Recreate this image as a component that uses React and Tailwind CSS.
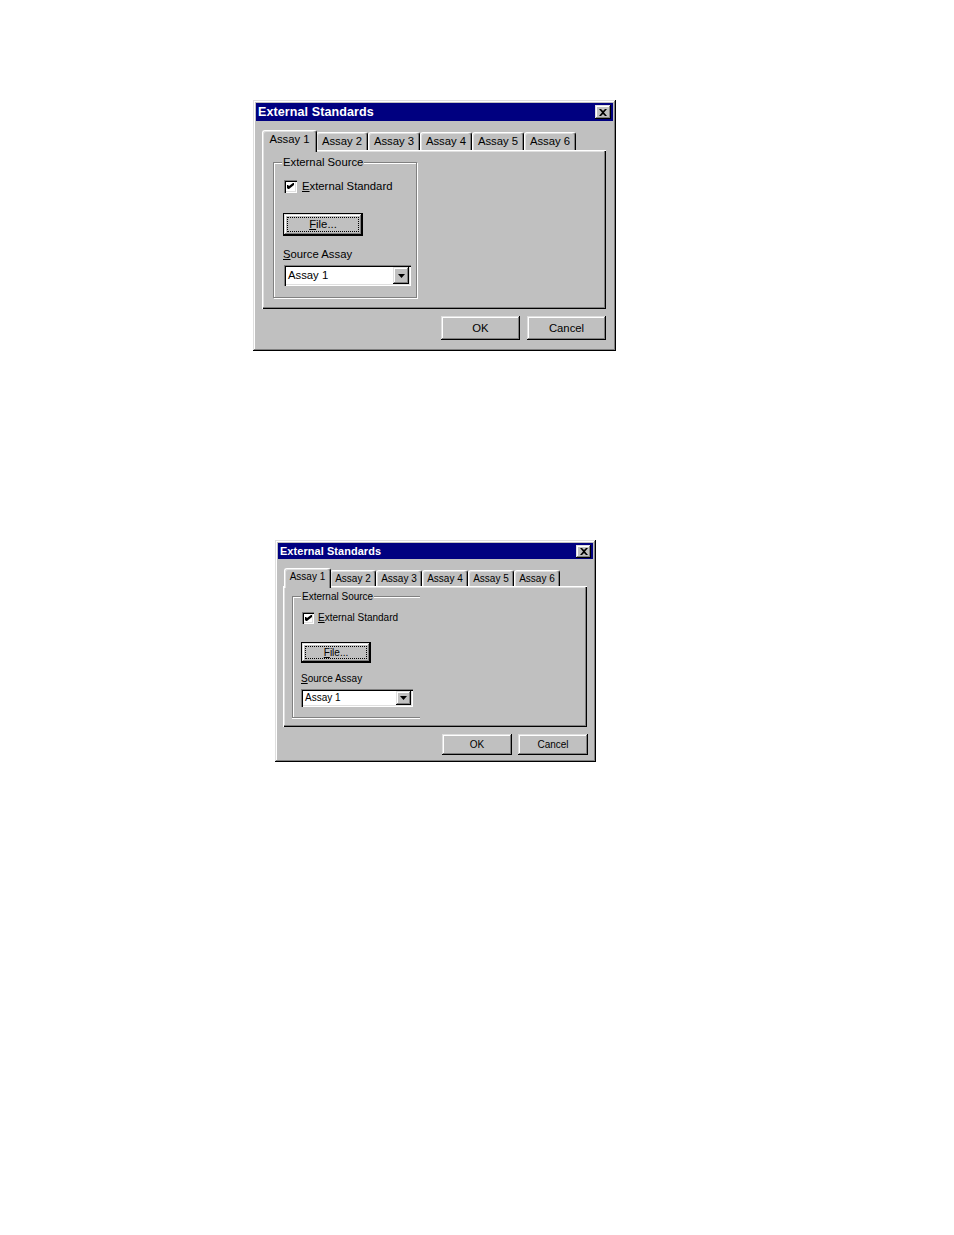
const raised =
  "shadow-[inset_-1px_-1px_0_#000,inset_1px_1px_0_#dfdfdf,inset_-2px_-2px_0_#808080,inset_2px_2px_0_#fff]";
const sunken =
  "shadow-[inset_1px_1px_0_#808080,inset_2px_2px_0_#000,inset_-1px_-1px_0_#fff,inset_-2px_-2px_0_#dfdfdf]";

const big = {
  box: "ml-[253px] mt-[100px] w-[363px] h-[251px]",
  title: "h-[18px] text-[12.5px]",
  close: "w-[16px] h-[14px]",
  text: "text-[11.3px]",
  tabRow: "mt-[9px] ml-[7px] h-[20px]",
  tabSel: "w-[55px] h-[22px] -mx-[1px]",
  tab: "w-[52px] h-[18px]",
  panel: "ml-[6px] w-[344px] h-[159px] pt-[12px] pl-[11px]",
  group: "w-[144px] h-[136px] pl-[9px] pt-[17px]",
  groupBorder: "border border-[#808080] shadow-[inset_1px_1px_0_#fff,1px_1px_0_#fff]",
  label: "-top-[8px] left-[8px]",
  check: "ml-[1px] w-[13px] h-[13px]",
  checkGap: "gap-[5px]",
  file: "mt-[20px] w-[80px] h-[23px]",
  source: "mt-[11px] leading-[14px]",
  combo: "mt-[4px] ml-[1px] w-[127px] h-[21px]",
  drop: "w-[16px]",
  buttons: "mt-[7px] pr-[7px] gap-[7px]",
  btn: "w-[79px] h-[24px]",
};

const small = {
  box: "ml-[275px] mt-[189px] w-[321px] h-[222px]",
  title: "h-[16px] text-[10.9px]",
  close: "w-[15px] h-[13px]",
  text: "text-[10px]",
  tabRow: "mt-[9px] ml-[7px] h-[18px]",
  tabSel: "w-[47px] h-[20px] -mx-[1px]",
  tab: "w-[46px] h-[16px]",
  panel: "ml-[5px] w-[304px] h-[141px] pt-[10px] pl-[9px]",
  group: "w-[128px] h-[122px] pl-[8px] pt-[15px]",
  groupBorder:
    "border border-r-0 border-[#808080] shadow-[inset_1px_1px_0_#fff,0_1px_0_#fff]",
  label: "-top-[7px] left-[8px]",
  check: "ml-[1px] w-[12px] h-[12px]",
  checkGap: "gap-[4px]",
  file: "mt-[18px] w-[70px] h-[21px]",
  source: "mt-[9px] leading-[13px]",
  combo: "mt-[4px] w-[112px] h-[18px]",
  drop: "w-[15px]",
  buttons: "mt-[7px] pr-[5px] gap-[6px]",
  btn: "w-[70px] h-[21px]",
};

function CloseGlyph() {
  return (
    <svg viewBox="0 0 8 7" className="w-[8px] h-[7px]">
      <path d="M0 0h2l2 2 2-2h2L5 3.5 8 7H6L4 5 2 7H0l3-3.5z" fill="#000" />
    </svg>
  );
}

function Dialog({ s }) {
  return (
    <div
      className={`${s.box} bg-[#c0c0c0] p-[3px] flex flex-col ${raised}`}
      style={{ fontFamily: '"Liberation Sans", Arial, sans-serif' }}
    >
      <div
        className={`${s.title} bg-[#000080] flex items-center justify-between pl-[2px] pr-[2px]`}
      >
        <span className="font-bold text-white leading-none tracking-[0.1px]">
          External Standards
        </span>
        <span className={`${s.close} bg-[#c0c0c0] flex items-center justify-center ${raised}`}>
          <CloseGlyph />
        </span>
      </div>

      <div className={`${s.tabRow} flex items-end ${s.text} text-black`}>
        {["Assay 1", "Assay 2", "Assay 3", "Assay 4", "Assay 5", "Assay 6"].map(
          (t, i) => (
            <div
              key={t}
              className={`${
                i === 0 ? `${s.tabSel} relative z-10 -mb-[2px] pb-[3px]` : s.tab
              } bg-[#c0c0c0] flex items-center justify-center rounded-t-[3px] border-t border-l border-white border-r border-r-black shadow-[inset_-1px_0_0_#808080,inset_1px_1px_0_#dfdfdf] leading-none`}
            >
              {t}
            </div>
          )
        )}
      </div>

      <div
        className={`${s.panel} bg-[#c0c0c0] shadow-[inset_1px_1px_0_#fff,inset_-1px_-1px_0_#000,inset_-2px_-2px_0_#808080,inset_2px_2px_0_#dfdfdf] ${s.text} text-black`}
      >
        <div className={`${s.group} relative ${s.groupBorder}`}>
          <span className={`absolute ${s.label} bg-[#c0c0c0] px-[1px] leading-[14px]`}>
            External Source
          </span>
          <div className={`flex items-center ${s.checkGap}`}>
            <span
              className={`${s.check} bg-white flex items-center justify-center ${sunken}`}
            >
              <svg viewBox="0 0 7 7" className="w-[7px] h-[7px]">
                <path
                  d="M0 2h1l1 1 4-3h1v2L2 6H1L0 5z"
                  fill="#000"
                />
              </svg>
            </span>
            <span className="leading-none">
              <span className="underline underline-offset-1">E</span>xternal
              Standard
            </span>
          </div>

          <div className={`${s.file} border border-black bg-[#c0c0c0] p-[3px] ${raised}`}>
            <div className="w-full h-full border border-dotted border-black flex items-center justify-center leading-none">
              <span>
                <span className="underline underline-offset-1">F</span>ile...
              </span>
            </div>
          </div>

          <div className={s.source}>
            <span className="underline underline-offset-1">S</span>ource Assay
          </div>

          <div className={`${s.combo} bg-white flex p-[2px] ${sunken}`}>
            <div className="flex-1 flex items-center pl-[2px] leading-none">
              Assay 1
            </div>
            <div
              className={`${s.drop} bg-[#c0c0c0] flex items-center justify-center ${raised}`}
            >
              <svg viewBox="0 0 7 4" className="w-[7px] h-[4px]">
                <path d="M0 0h7L3.5 4z" fill="#000" />
              </svg>
            </div>
          </div>
        </div>
      </div>

      <div className={`${s.buttons} flex justify-end ${s.text} text-black`}>
        <div className={`${s.btn} bg-[#c0c0c0] flex items-center justify-center ${raised}`}>
          OK
        </div>
        <div className={`${s.btn} bg-[#c0c0c0] flex items-center justify-center ${raised}`}>
          Cancel
        </div>
      </div>
    </div>
  );
}

export default function App() {
  return (
    <div className="w-[954px] h-[1235px] bg-white flex flex-col pt-0">
      <Dialog s={big} />
      <Dialog s={small} />
    </div>
  );
}
